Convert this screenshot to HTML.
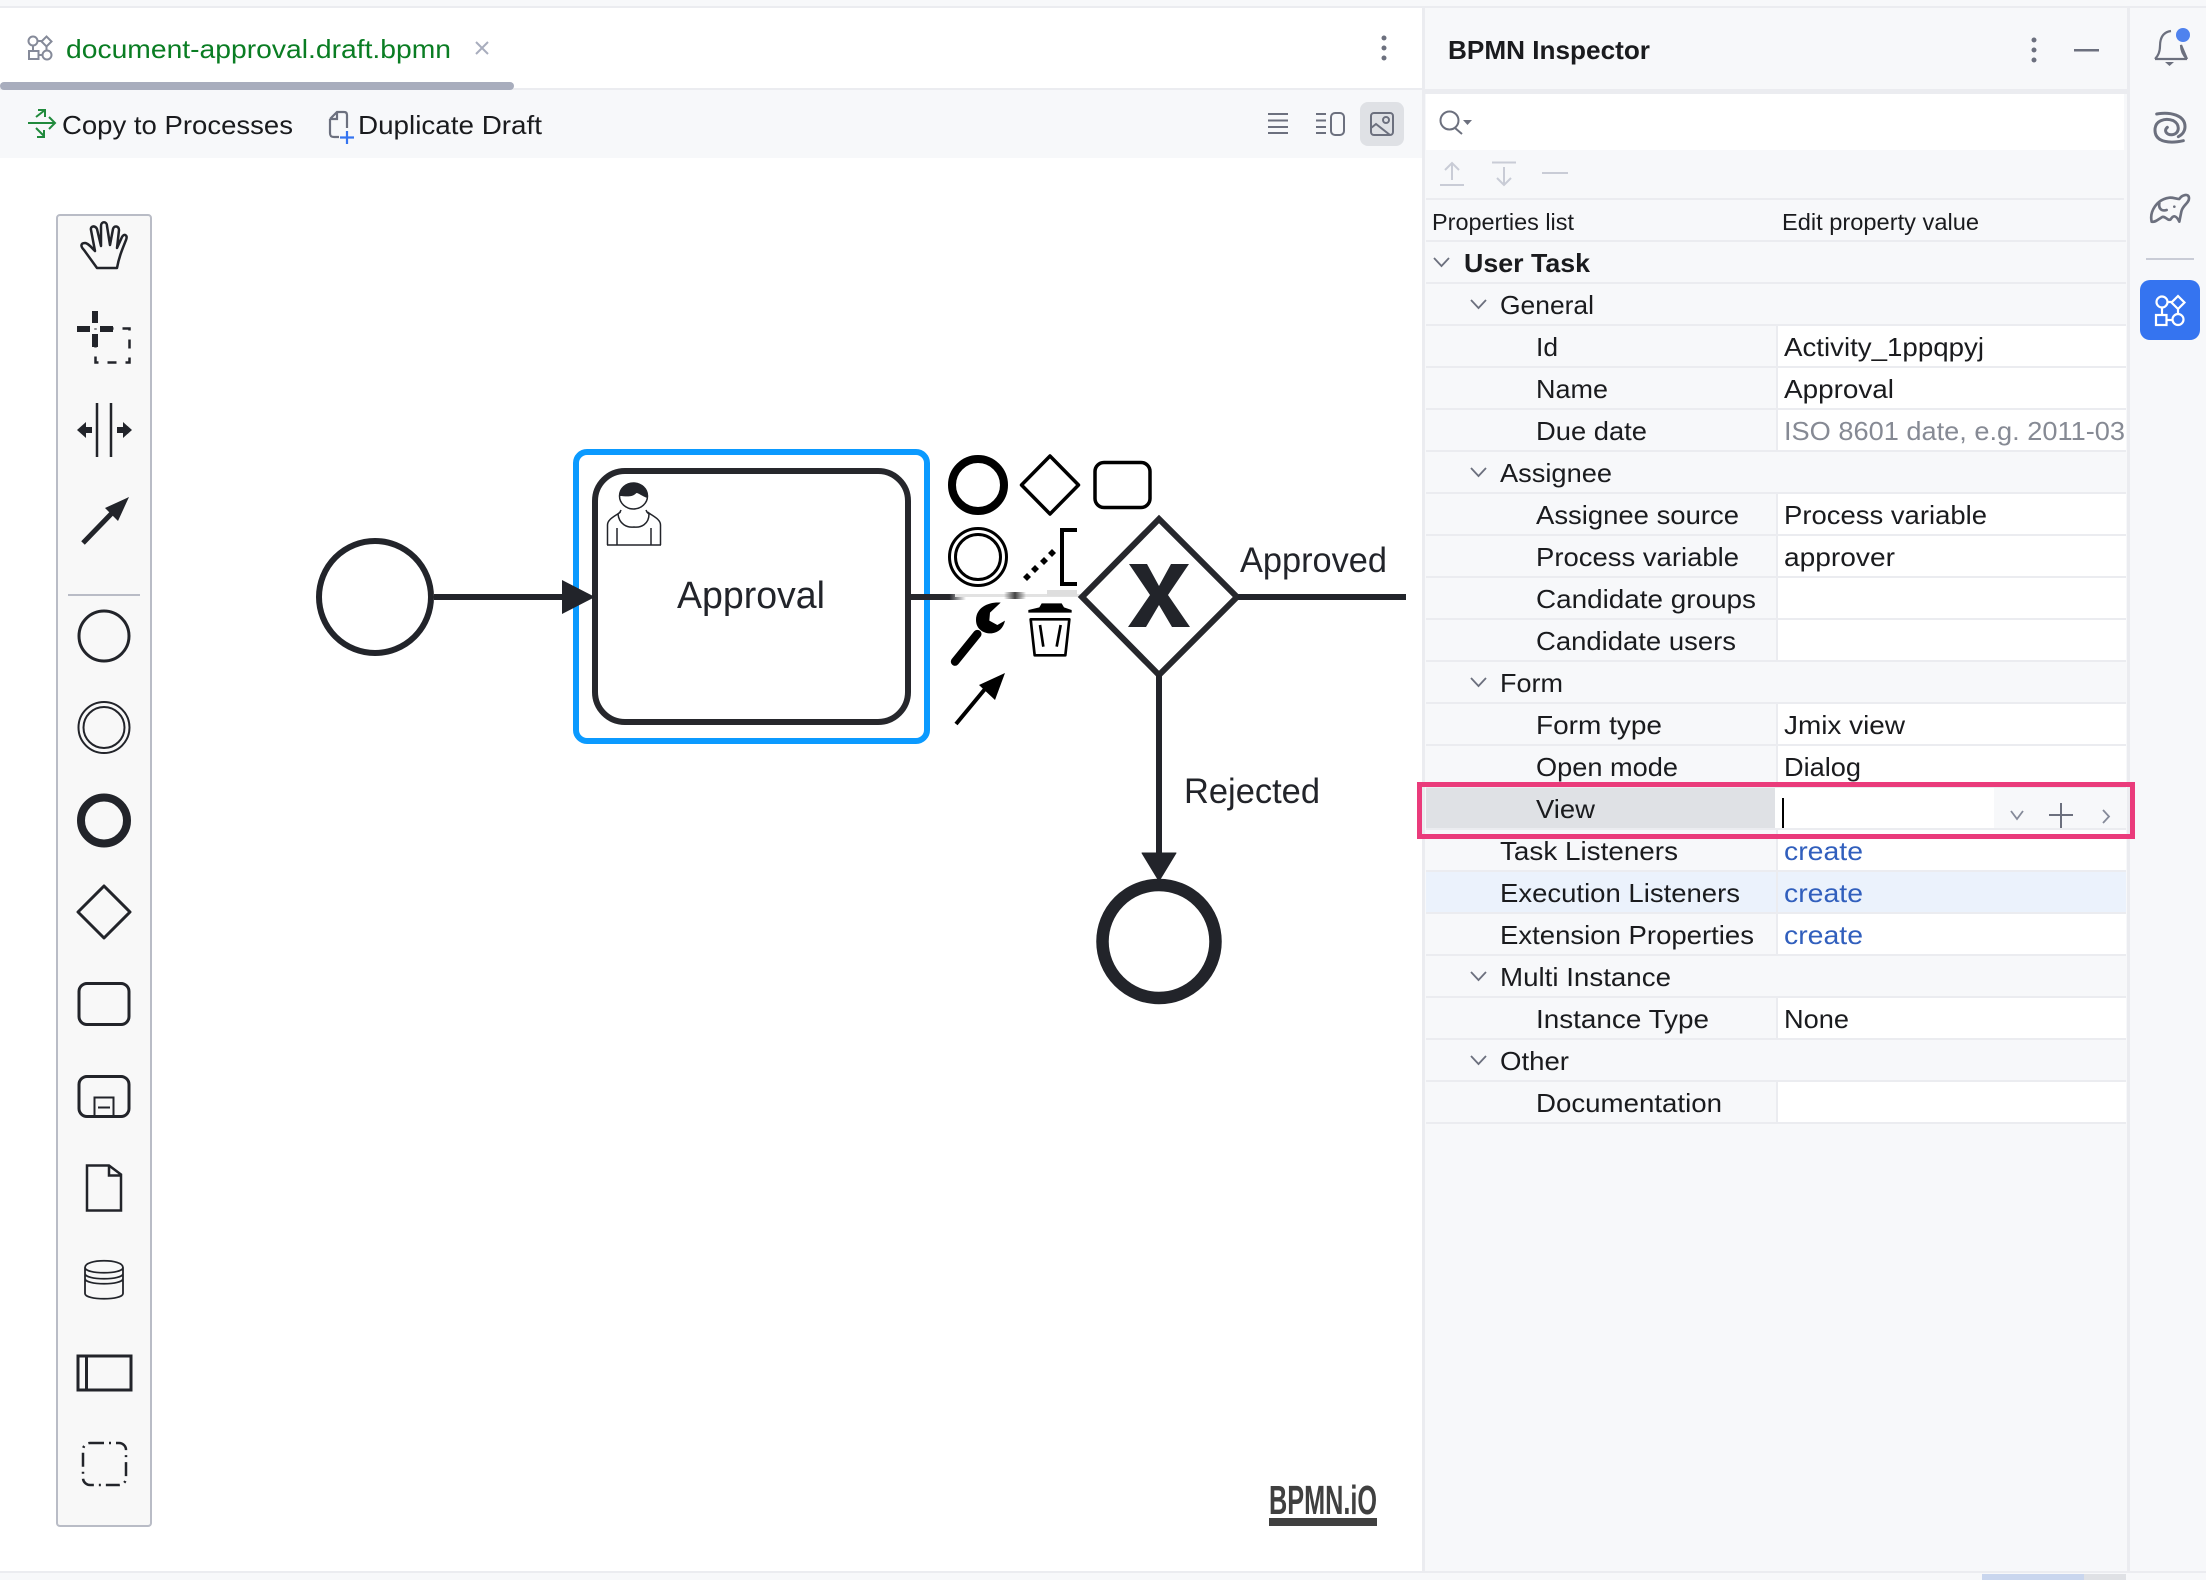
<!DOCTYPE html>
<html><head><meta charset="utf-8"><style>
html,body{margin:0;padding:0;background:#fff}
svg{display:block}
text{font-family:"Liberation Sans",sans-serif;fill:#1a1b1e;font-size:26px}
.g{fill:none;stroke:#6c707e;stroke-width:2}
.d{fill:none;stroke:#22242a}
.k{fill:none;stroke:#000}
</style></head><body>
<svg width="2206" height="1580" viewBox="0 0 2206 1580" xmlns="http://www.w3.org/2000/svg">
<defs>
<linearGradient id="f1" x1="0" x2="1" y1="0" y2="0"><stop offset="0" stop-color="#26272c"/><stop offset=".7" stop-color="#26272c"/><stop offset="1" stop-color="#26272c" stop-opacity="0"/></linearGradient>
<linearGradient id="f2" x1="0" x2="1" y1="0" y2="0"><stop offset="0" stop-color="#444" stop-opacity="0"/><stop offset=".5" stop-color="#444"/><stop offset="1" stop-color="#444" stop-opacity="0"/></linearGradient>
</defs>
<rect width="2206" height="1580" fill="#fff"/>
<rect width="2206" height="6" fill="#f7f8fa"/>
<rect y="6" width="2206" height="2" fill="#ebecf0"/>
<!-- toolbar -->
<rect y="88" width="1422" height="2" fill="#ebecf0"/>
<rect y="90" width="1422" height="68" fill="#f7f8fa"/>
<rect y="82" width="514" height="8" rx="4" fill="#a8adbd"/>
<!-- tab -->
<g fill="none" stroke="#858a99" stroke-width="2">
<circle cx="33" cy="41" r="4.500"/><path d="M46.500 36.500l5 5-5 5-5-5zM37.500 41h4M33 45.500v5.500M39 55h3.500M46.500 46.500v4"/><rect x="29" y="51" width="9.500" height="8"/><circle cx="47" cy="55" r="4.500"/>
</g>
<text x="66" y="58" textLength="385" lengthAdjust="spacingAndGlyphs" style="fill:#0a7d23">document-approval.draft.bpmn</text>
<path d="M476 42l12 12M488 42l-12 12" stroke="#a8adbd" stroke-width="2" fill="none"/>
<circle cx="1384" cy="38" r="2.500" fill="#6c707e"/><circle cx="1384" cy="48" r="2.500" fill="#6c707e"/><circle cx="1384" cy="58" r="2.500" fill="#6c707e"/>
<!-- copy icon -->
<path d="M28 123h27M49 117l6 6-6 6M36 117l9-7M38 110h7v7M36 128l8 8M37 137h7v-7" fill="none" stroke="#208a3c" stroke-width="2"/>
<text x="62" y="134" textLength="231" lengthAdjust="spacingAndGlyphs">Copy to Processes</text>
<path d="M330 119l7-7h7c2 0 3 1 3 3v13M330 119v14c0 3 1 4 4 4h5M337 112v7h-7" fill="none" stroke="#6c707e" stroke-width="2.200"/>
<path d="M347 131v13M340 137.500h14" fill="none" stroke="#3574f0" stroke-width="2.200"/>
<text x="358" y="134" textLength="184" lengthAdjust="spacingAndGlyphs">Duplicate Draft</text>
<path d="M1268 114h20M1268 120.500h20M1268 127h20M1268 133h20M1316 114h10M1316 120.500h10M1316 127h10M1316 133h10" stroke="#6c707e" stroke-width="2" fill="none"/>
<rect x="1331" y="113" width="13" height="22" rx="4" fill="none" stroke="#6c707e" stroke-width="2"/>
<rect x="1360" y="102" width="44" height="44" rx="8" fill="#dfe1e5"/>
<rect x="1371" y="113" width="22" height="22" rx="3" fill="none" stroke="#6c707e" stroke-width="2"/>
<circle cx="1386" cy="120" r="3" fill="none" stroke="#6c707e" stroke-width="2"/>
<path d="M1371 128l5-4 14 11" fill="none" stroke="#6c707e" stroke-width="2"/>

<!-- palette -->
<rect x="57" y="215" width="94" height="1311" rx="3" fill="#f8f8f8" stroke="#b9bcc6" stroke-width="2"/>
<path d="M97 268L84 250C80 246 81 243 85 243C88 243 92 248 95 251L91 230C90 226 95 225 97 229L101 246L101 226C101 221 107 221 107 226L110 245L113 229C114 225 119 226 119 230L117 248L122 237C124 233 128 235 126 240C122 250 119 257 117 268Z" class="d" stroke-width="2.500" stroke-linejoin="round"/>
<path d="M95 311v12M95 334v13M77 329h13M100 329h13" stroke="#22242a" stroke-width="6" fill="none"/>
<rect x="95.500" y="328.500" width="34" height="34" fill="none" stroke="#22242a" stroke-width="2.500" stroke-dasharray="9 9" stroke-dashoffset="-9"/>
<path d="M97 403v54M111 403v54" class="d" stroke-width="2.500"/>
<path d="M77 430l9-8v5h6v6h-6v5zM132 430l-9-8v5h-6v6h6v5z" fill="#22242a"/>
<path d="M83 543l30-31" class="d" stroke-width="5"/>
<path d="M105 508L129 497L118 521Z" fill="#22242a"/>
<rect x="68" y="594" width="72" height="2" fill="#b9bcc6"/>
<circle cx="104" cy="636" r="25" class="d" stroke-width="3"/>
<circle cx="104" cy="727.500" r="25.500" class="d" stroke-width="2"/><circle cx="104" cy="727.500" r="20.500" class="d" stroke-width="2"/>
<circle cx="104" cy="820.500" r="23" class="d" stroke-width="8"/>
<path d="M104 886l26 26-26 26-26-26z" class="d" stroke-width="3" stroke-linejoin="round"/>
<rect x="79" y="983.500" width="50" height="41" rx="8" class="d" stroke-width="3"/>
<rect x="79" y="1076.500" width="50" height="40" rx="8" class="d" stroke-width="3"/>
<path d="M94.500 1116.500v-19h19v19M98 1107.500h12" class="d" stroke-width="2"/>
<path d="M87 1165.500h22l12 9v36H87zM109 1165.500v10h12" class="d" stroke-width="2.500"/>
<path d="M85 1267.500v26c0 7 38 7 38 0v-26M85 1267.500c0-9 38-9 38 0c0 7-38 7-38 0M85 1273.500c0 7 38 7 38 0M85 1278.500c0 7 38 7 38 0" class="d" stroke-width="1.800"/>
<rect x="78" y="1356" width="53" height="34" class="d" stroke-width="3"/><path d="M86.500 1356v34" class="d" stroke-width="3"/>
<rect x="83" y="1443" width="43" height="42" rx="7" class="d" stroke-width="2.500" stroke-dasharray="14 5 2 5"/>

<!-- diagram -->
<circle cx="375" cy="597" r="56" fill="#fff" class="d" stroke-width="6"/>
<rect x="576" y="452" width="351" height="289" rx="11" fill="#fff" stroke="#0b9aff" stroke-width="6"/>
<rect x="434" y="594" width="130" height="6" fill="#22242a"/>
<rect x="595" y="471" width="313" height="251" rx="30" fill="#fff" stroke="#26272c" stroke-width="6"/>
<path d="M562 580L595 597L562 614Z" fill="#22242a"/>
<text x="677" y="608" textLength="148" lengthAdjust="spacingAndGlyphs" style="font-size:38px;fill:#22242a">Approval</text>
<!-- user icon -->
<path d="M607.500 545v-20c0-6 8-9 13-13M660.500 545v-20c0-6-8-9-13-13M607 545h54M617 528v17M651 528v17M621 510c-1 3-2 3-3 4c1 10 9 14 16 13c7 1 15-3 15-13c-1-1-2-1-3-4" fill="#fff" stroke="#22242a" stroke-width="1.500"/>
<ellipse cx="633.500" cy="496" rx="14" ry="13" fill="#fff" stroke="#22242a" stroke-width="1.500"/>
<path d="M619.500 496c0-9 6-13 14-13s14 5 14 15c-6-2-9-5-11-5c-5 5-11 3-17 3z" fill="#22242a"/>

<!-- flow out -->
<rect x="911" y="594" width="55" height="6" fill="url(#f1)"/>
<rect x="955" y="594" width="127" height="3" fill="#e2e2e2"/>
<rect x="1004" y="592" width="22" height="7" fill="url(#f2)"/>
<rect x="1047" y="590" width="30" height="6" fill="#dedede"/>

<!-- context pad -->
<circle cx="978" cy="485" r="26" class="k" stroke-width="8"/>
<path d="M1050 456l28.500 29-28.500 29-28.500-29z" class="k" stroke-width="3.500" stroke-linejoin="round"/>
<rect x="1095" y="462.500" width="55" height="45" rx="9" class="k" stroke-width="3.500"/>
<circle cx="978" cy="557" r="28.500" class="k" stroke-width="3"/><circle cx="978" cy="557" r="22.500" class="k" stroke-width="3"/>
<path d="M1026 576l4-4 4 4-4 4zM1034 568l4-4 4 4-4 4zM1043 560l4-4 4 4-4 4zM1051 552l4-4 4 4-4 4z" fill="#000" transform="translate(-3 1)"/>
<path d="M1077 530h-15v54h15" class="k" stroke-width="4"/>
<g transform="translate(940 590) scale(.33333)">
<path d="M45 215L112 132" stroke="#000" stroke-width="25" stroke-linecap="round" fill="none"/>
<path d="M182 38C150 35 108 50 108 90C108 120 135 132 155 130C175 128 190 115 195 92L172 105L148 92L150 68Z" fill="#000"/>
<path d="M305 40H365L372 52L395 60V68H265V60L298 52Z" fill="#000"/>
<path d="M272 88H388L376 196H284Z" fill="none" stroke="#000" stroke-width="8" stroke-linejoin="round"/>
<path d="M300 105L310 170M362 105L350 170" fill="none" stroke="#000" stroke-width="8"/>
</g>
<path d="M956 724L985 689" stroke="#000" stroke-width="4" fill="none"/>
<path d="M979 685L1005 673L995 700Z" fill="#000"/>

<!-- gateway -->
<path d="M1159 519L1237 597L1159 675L1082 597Z" fill="#fff" stroke="#26272c" stroke-width="6" stroke-linejoin="miter"/>
<path d="M1129 564h18l12 22 12-22h18l-21 31 22 32h-18l-13-22-13 22h-18l22-32z" fill="#22242a"/>
<rect x="1238" y="594" width="168" height="6" fill="#22242a"/>
<rect x="1156" y="675" width="6" height="180" fill="#22242a"/>
<path d="M1142 853h34l-17 28z" fill="#22242a" stroke="#22242a" stroke-width="1" stroke-linejoin="round"/>
<circle cx="1159" cy="941.500" r="56.500" fill="#fff" class="d" stroke-width="12.500"/>
<text x="1240" y="572" textLength="147" lengthAdjust="spacingAndGlyphs" style="font-size:35px;fill:#22242a">Approved</text>
<text x="1184" y="803" textLength="136" lengthAdjust="spacingAndGlyphs" style="font-size:35px;fill:#22242a">Rejected</text>
<text x="1269" y="1514" textLength="108" lengthAdjust="spacingAndGlyphs" style="font-size:41px;font-weight:bold;fill:#404040">BPMN.iO</text>
<rect x="1269" y="1518" width="108" height="8" fill="#404040"/>

<!-- inspector -->
<rect x="1422" y="8" width="784" height="1565" fill="#f7f8fa"/>
<rect x="1422" y="8" width="3" height="1565" fill="#ebecf0"/>
<rect x="2127" y="8" width="3" height="1565" fill="#ebecf0"/>
<rect x="0" y="1571" width="2206" height="2" fill="#ebecf0"/>
<rect x="0" y="1573" width="2206" height="7" fill="#f7f8fa"/>
<rect x="1982" y="1574" width="102" height="6" fill="#c9d6ee"/>
<rect x="2084" y="1574" width="42" height="6" fill="#dfe1e5"/>
<rect x="1425" y="89" width="702" height="5" fill="#ebecf0"/>
<rect x="1426" y="94" width="698" height="56" fill="#fff"/>
<text x="1448" y="59" textLength="202" lengthAdjust="spacingAndGlyphs" style="font-weight:bold">BPMN Inspector</text>
<circle cx="2034" cy="40" r="2.500" fill="#6c707e"/><circle cx="2034" cy="50" r="2.500" fill="#6c707e"/><circle cx="2034" cy="60" r="2.500" fill="#6c707e"/>
<rect x="2074" y="49" width="25" height="2.500" fill="#6c707e"/>
<circle cx="1449.500" cy="120.500" r="9" class="g"/><path d="M1455 128l7 6" class="g"/><path d="M1463 120h9l-4.500 5z" fill="#6c707e"/>
<path d="M1440 185h24M1452 180v-16M1445 170l7-7 7 7M1492 162.500h24M1504 167v17M1497 178l7 7 7-7M1542 173h26" fill="none" stroke="#c9ccd6" stroke-width="2"/>
<rect x="1426" y="198" width="698" height="2" fill="#ebecf0"/>
<text x="1432" y="230" textLength="142" lengthAdjust="spacingAndGlyphs" style="font-size:23px">Properties list</text>
<text x="1782" y="230" textLength="197" lengthAdjust="spacingAndGlyphs" style="font-size:23px">Edit property value</text>

<!-- value cells -->
<g fill="#fff">
<rect x="1778" y="326" width="348" height="40"/><rect x="1778" y="368" width="348" height="40"/><rect x="1778" y="410" width="348" height="40"/>
<rect x="1778" y="494" width="348" height="40"/><rect x="1778" y="536" width="348" height="40"/><rect x="1778" y="578" width="348" height="40"/><rect x="1778" y="620" width="348" height="40"/>
<rect x="1778" y="704" width="348" height="40"/><rect x="1778" y="746" width="348" height="40"/>
<rect x="1778" y="830" width="348" height="40"/><rect x="1778" y="914" width="348" height="40"/><rect x="1778" y="998" width="348" height="40"/><rect x="1778" y="1082" width="348" height="40"/>
</g>
<rect x="1426" y="872" width="700" height="40" fill="#ebf2fc"/>
<g fill="#ebecf0">
<rect x="1426" y="240" width="700" height="2"/><rect x="1426" y="282" width="700" height="2"/><rect x="1426" y="324" width="700" height="2"/><rect x="1426" y="366" width="700" height="2"/><rect x="1426" y="408" width="700" height="2"/><rect x="1426" y="450" width="700" height="2"/><rect x="1426" y="492" width="700" height="2"/><rect x="1426" y="534" width="700" height="2"/><rect x="1426" y="576" width="700" height="2"/><rect x="1426" y="618" width="700" height="2"/><rect x="1426" y="660" width="700" height="2"/><rect x="1426" y="702" width="700" height="2"/><rect x="1426" y="744" width="700" height="2"/><rect x="1426" y="786" width="700" height="2"/><rect x="1426" y="828" width="700" height="2"/><rect x="1426" y="870" width="700" height="2"/><rect x="1426" y="912" width="700" height="2"/><rect x="1426" y="954" width="700" height="2"/><rect x="1426" y="996" width="700" height="2"/><rect x="1426" y="1038" width="700" height="2"/><rect x="1426" y="1080" width="700" height="2"/><rect x="1426" y="1122" width="700" height="2"/>
<rect x="1776" y="326" width="2" height="124"/><rect x="1776" y="494" width="2" height="166"/><rect x="1776" y="704" width="2" height="82"/><rect x="1776" y="830" width="2" height="124"/><rect x="1776" y="998" width="2" height="40"/><rect x="1776" y="1082" width="2" height="40"/>
</g>
<!-- chevrons -->
<path d="M1434 258l7.500 8 7.500-8M1471 300l7.500 8 7.500-8M1471 468l7.500 8 7.500-8M1471 678l7.500 8 7.500-8M1471 972l7.500 8 7.500-8M1471 1056l7.500 8 7.500-8" fill="none" stroke="#6c707e" stroke-width="1.800"/>

<text x="1464" y="272" textLength="126" lengthAdjust="spacingAndGlyphs" style="font-weight:bold">User Task</text>
<text x="1500" y="314" textLength="94" lengthAdjust="spacingAndGlyphs">General</text>
<text x="1536" y="356" textLength="22" lengthAdjust="spacingAndGlyphs">Id</text>
<text x="1536" y="398" textLength="72" lengthAdjust="spacingAndGlyphs">Name</text>
<text x="1536" y="440" textLength="111" lengthAdjust="spacingAndGlyphs">Due date</text>
<text x="1500" y="482" textLength="112" lengthAdjust="spacingAndGlyphs">Assignee</text>
<text x="1536" y="524" textLength="203" lengthAdjust="spacingAndGlyphs">Assignee source</text>
<text x="1536" y="566" textLength="203" lengthAdjust="spacingAndGlyphs">Process variable</text>
<text x="1536" y="608" textLength="220" lengthAdjust="spacingAndGlyphs">Candidate groups</text>
<text x="1536" y="650" textLength="200" lengthAdjust="spacingAndGlyphs">Candidate users</text>
<text x="1500" y="692" textLength="63" lengthAdjust="spacingAndGlyphs">Form</text>
<text x="1536" y="734" textLength="126" lengthAdjust="spacingAndGlyphs">Form type</text>
<text x="1536" y="776" textLength="142" lengthAdjust="spacingAndGlyphs">Open mode</text>
<text x="1500" y="860" textLength="178" lengthAdjust="spacingAndGlyphs">Task Listeners</text>
<text x="1500" y="902" textLength="240" lengthAdjust="spacingAndGlyphs">Execution Listeners</text>
<text x="1500" y="944" textLength="254" lengthAdjust="spacingAndGlyphs">Extension Properties</text>
<text x="1500" y="986" textLength="171" lengthAdjust="spacingAndGlyphs">Multi Instance</text>
<text x="1536" y="1028" textLength="173" lengthAdjust="spacingAndGlyphs">Instance Type</text>
<text x="1500" y="1070" textLength="69" lengthAdjust="spacingAndGlyphs">Other</text>
<text x="1536" y="1112" textLength="186" lengthAdjust="spacingAndGlyphs">Documentation</text>

<text x="1784" y="356" textLength="200" lengthAdjust="spacingAndGlyphs">Activity_1ppqpyj</text>
<text x="1784" y="398" textLength="110" lengthAdjust="spacingAndGlyphs">Approval</text>
<text x="1784" y="440" textLength="341" lengthAdjust="spacingAndGlyphs" style="fill:#868a94">ISO 8601 date, e.g. 2011-03</text>
<text x="1784" y="524" textLength="203" lengthAdjust="spacingAndGlyphs">Process variable</text>
<text x="1784" y="566" textLength="111" lengthAdjust="spacingAndGlyphs">approver</text>
<text x="1784" y="734" textLength="121" lengthAdjust="spacingAndGlyphs">Jmix view</text>
<text x="1784" y="776" textLength="77" lengthAdjust="spacingAndGlyphs">Dialog</text>
<text x="1784" y="860" textLength="79" lengthAdjust="spacingAndGlyphs" style="fill:#315fbd">create</text>
<text x="1784" y="902" textLength="79" lengthAdjust="spacingAndGlyphs" style="fill:#315fbd">create</text>
<text x="1784" y="944" textLength="79" lengthAdjust="spacingAndGlyphs" style="fill:#315fbd">create</text>
<text x="1784" y="1028" textLength="65" lengthAdjust="spacingAndGlyphs">None</text>

<!-- view row -->
<rect x="1426" y="788" width="349" height="40" fill="#dfe1e5"/>
<rect x="1775" y="788" width="219" height="40" fill="#fff"/>
<rect x="1994" y="788" width="132" height="40" fill="#f7f8fa"/>
<text x="1536" y="818" textLength="59" lengthAdjust="spacingAndGlyphs">View</text>
<rect x="1782" y="798" width="2" height="30" fill="#000"/>
<path d="M2011 811l6 8 6-8M2103 810l6 6.500-6 6.500" fill="none" stroke="#858a99" stroke-width="1.800"/>
<path d="M2049 815h24M2061 803v25" fill="none" stroke="#6c707e" stroke-width="2"/>
<rect x="1419.500" y="784.500" width="713" height="52" fill="none" stroke="#ea3b7b" stroke-width="5"/>

<!-- right strip -->
<path d="M2155 59c4-4 5-9 5-13c0-9 4-14 11-15M2181 45c0 5 2 10 6 14zM2155 59h32" fill="none" stroke="#6c707e" stroke-width="2.200"/>
<path d="M2165 62h9l-4.500 4z" fill="#6c707e"/>
<circle cx="2183" cy="35" r="7" fill="#4f82ee"/>
<g transform="translate(2140 100) scale(.33333)" fill="none" stroke="#6c707e" stroke-linecap="round">
<path d="M130 122C95 130 45 130 45 90C45 62 75 52 100 62C120 72 120 100 98 104C80 106 70 92 82 82" stroke-width="9"/>
<path d="M50 42C90 35 135 45 135 80C135 95 125 105 115 110" stroke-width="9"/>
<path d="M35 365C28 335 50 298 88 293C100 292 108 297 118 297C125 285 147 278 147 295C147 310 128 315 124 335L118 365C108 345 100 345 92 358C84 365 75 345 65 352C55 358 45 368 35 365M58 310C55 325 65 335 80 330" stroke-width="8" stroke-linejoin="round"/>
<circle cx="103" cy="320" r="3" fill="#6c707e" stroke-width="2"/>
</g>
<rect x="2146" y="258" width="48" height="2" fill="#c9ccd6"/>
<rect x="2140" y="280" width="60" height="60" rx="10" fill="#3574f0"/>
<g fill="none" stroke="#fff" stroke-width="2.200">
<circle cx="2162" cy="302" r="5.500"/><path d="M2178 296l6.500 6.500-6.500 6.500-6.500-6.500zM2167.500 302h4M2162 307.500v7.500M2178 309v5"/><rect x="2156" y="315" width="10.500" height="10"/><path d="M2166.500 320h6"/><circle cx="2178" cy="319.500" r="5.500"/>
</g>
</svg>
</body></html>
